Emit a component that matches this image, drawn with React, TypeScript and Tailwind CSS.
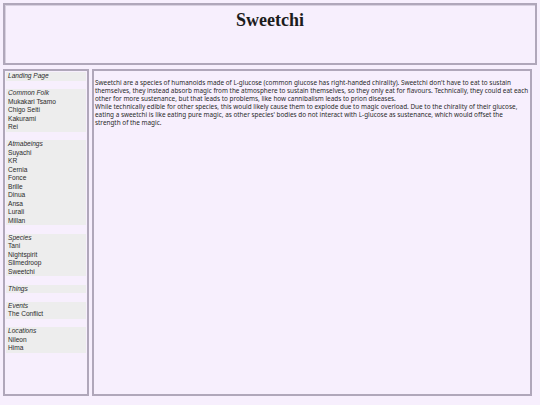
const groups: { title: string; items: string[] }[] = [
  { title: 'Landing Page', items: [] },
  { title: 'Common Folk', items: ['Mukakari Tsamo', 'Chigo Seiti', 'Kakurami', 'Rei'] },
  { title: 'Atmabeings', items: ['Suyachi', 'KR', 'Cernia', 'Fonce', 'Brille', 'Dinua', 'Ansa', 'Lurali', 'Millan'] },
  { title: 'Species', items: ['Tani', 'Nightspirit', 'Slimedroop', 'Sweetchi'] },
  { title: 'Things', items: [] },
  { title: 'Events', items: ['The Conflict'] },
  { title: 'Locations', items: ['Nileon', 'Hima'] },
]

export default function App() {
  return (
    <div className="flex h-[405px] w-[540px] flex-col gap-[3px] bg-[#f7effd] px-[3px] pt-[3px] pb-[9px] text-black">
      <header className="h-[62px] shrink-0 border-2 border-[#b0a7ba] shadow-[inset_1px_1px_0_#d8d0e0]">
        <h1 className="pt-[3px] text-center text-[18px] font-bold leading-[24px] text-[#1c1c1c] [font-family:'Liberation_Serif',serif]">
          Sweetchi
        </h1>
      </header>

      <div className="flex min-h-0 flex-1 gap-[3px] pt-[1px]">
        <nav className="w-[86px] shrink-0 border-2 border-[#b0a7ba] px-[1px] pt-[1px] text-[6.6px] leading-[8.5px] text-[#2a2a2a] [font-family:'Liberation_Sans',Arial,sans-serif]">
          <div className="flex flex-col gap-[8.5px]">
            {groups.map((g) => (
              <div key={g.title} className="bg-[#ededed]">
                <div className="px-[2px] italic">{g.title}</div>
                {g.items.map((item) => (
                  <div key={item} className="px-[2px]">{item}</div>
                ))}
              </div>
            ))}
          </div>
        </nav>

        <main className="mr-[5px] flex-1 border-2 border-[#b0a7ba] px-[1px] pt-[8px] text-[6.4px] leading-[8px] text-[#2a2a2a] [font-family:'Noto_Sans',sans-serif]">
          <p>
            Sweetchi are a species of humanoids made of L-glucose (common glucose has right-handed chirality). Sweetchi don't have to eat to sustain themselves, they instead absorb magic from the atmosphere to sustain themselves, so they only eat for flavours. Technically, they could eat each other for more sustenance, but that leads to problems, like how cannibalism leads to prion diseases.
          </p>
          <p>
            While technically edible for other species, this would likely cause them to explode due to magic overload. Due to the chirality of their glucose, eating a sweetchi is like eating pure magic, as other species' bodies do not interact with L-glucose as sustenance, which would offset the strength of the magic.
          </p>
        </main>
      </div>
    </div>
  )
}
